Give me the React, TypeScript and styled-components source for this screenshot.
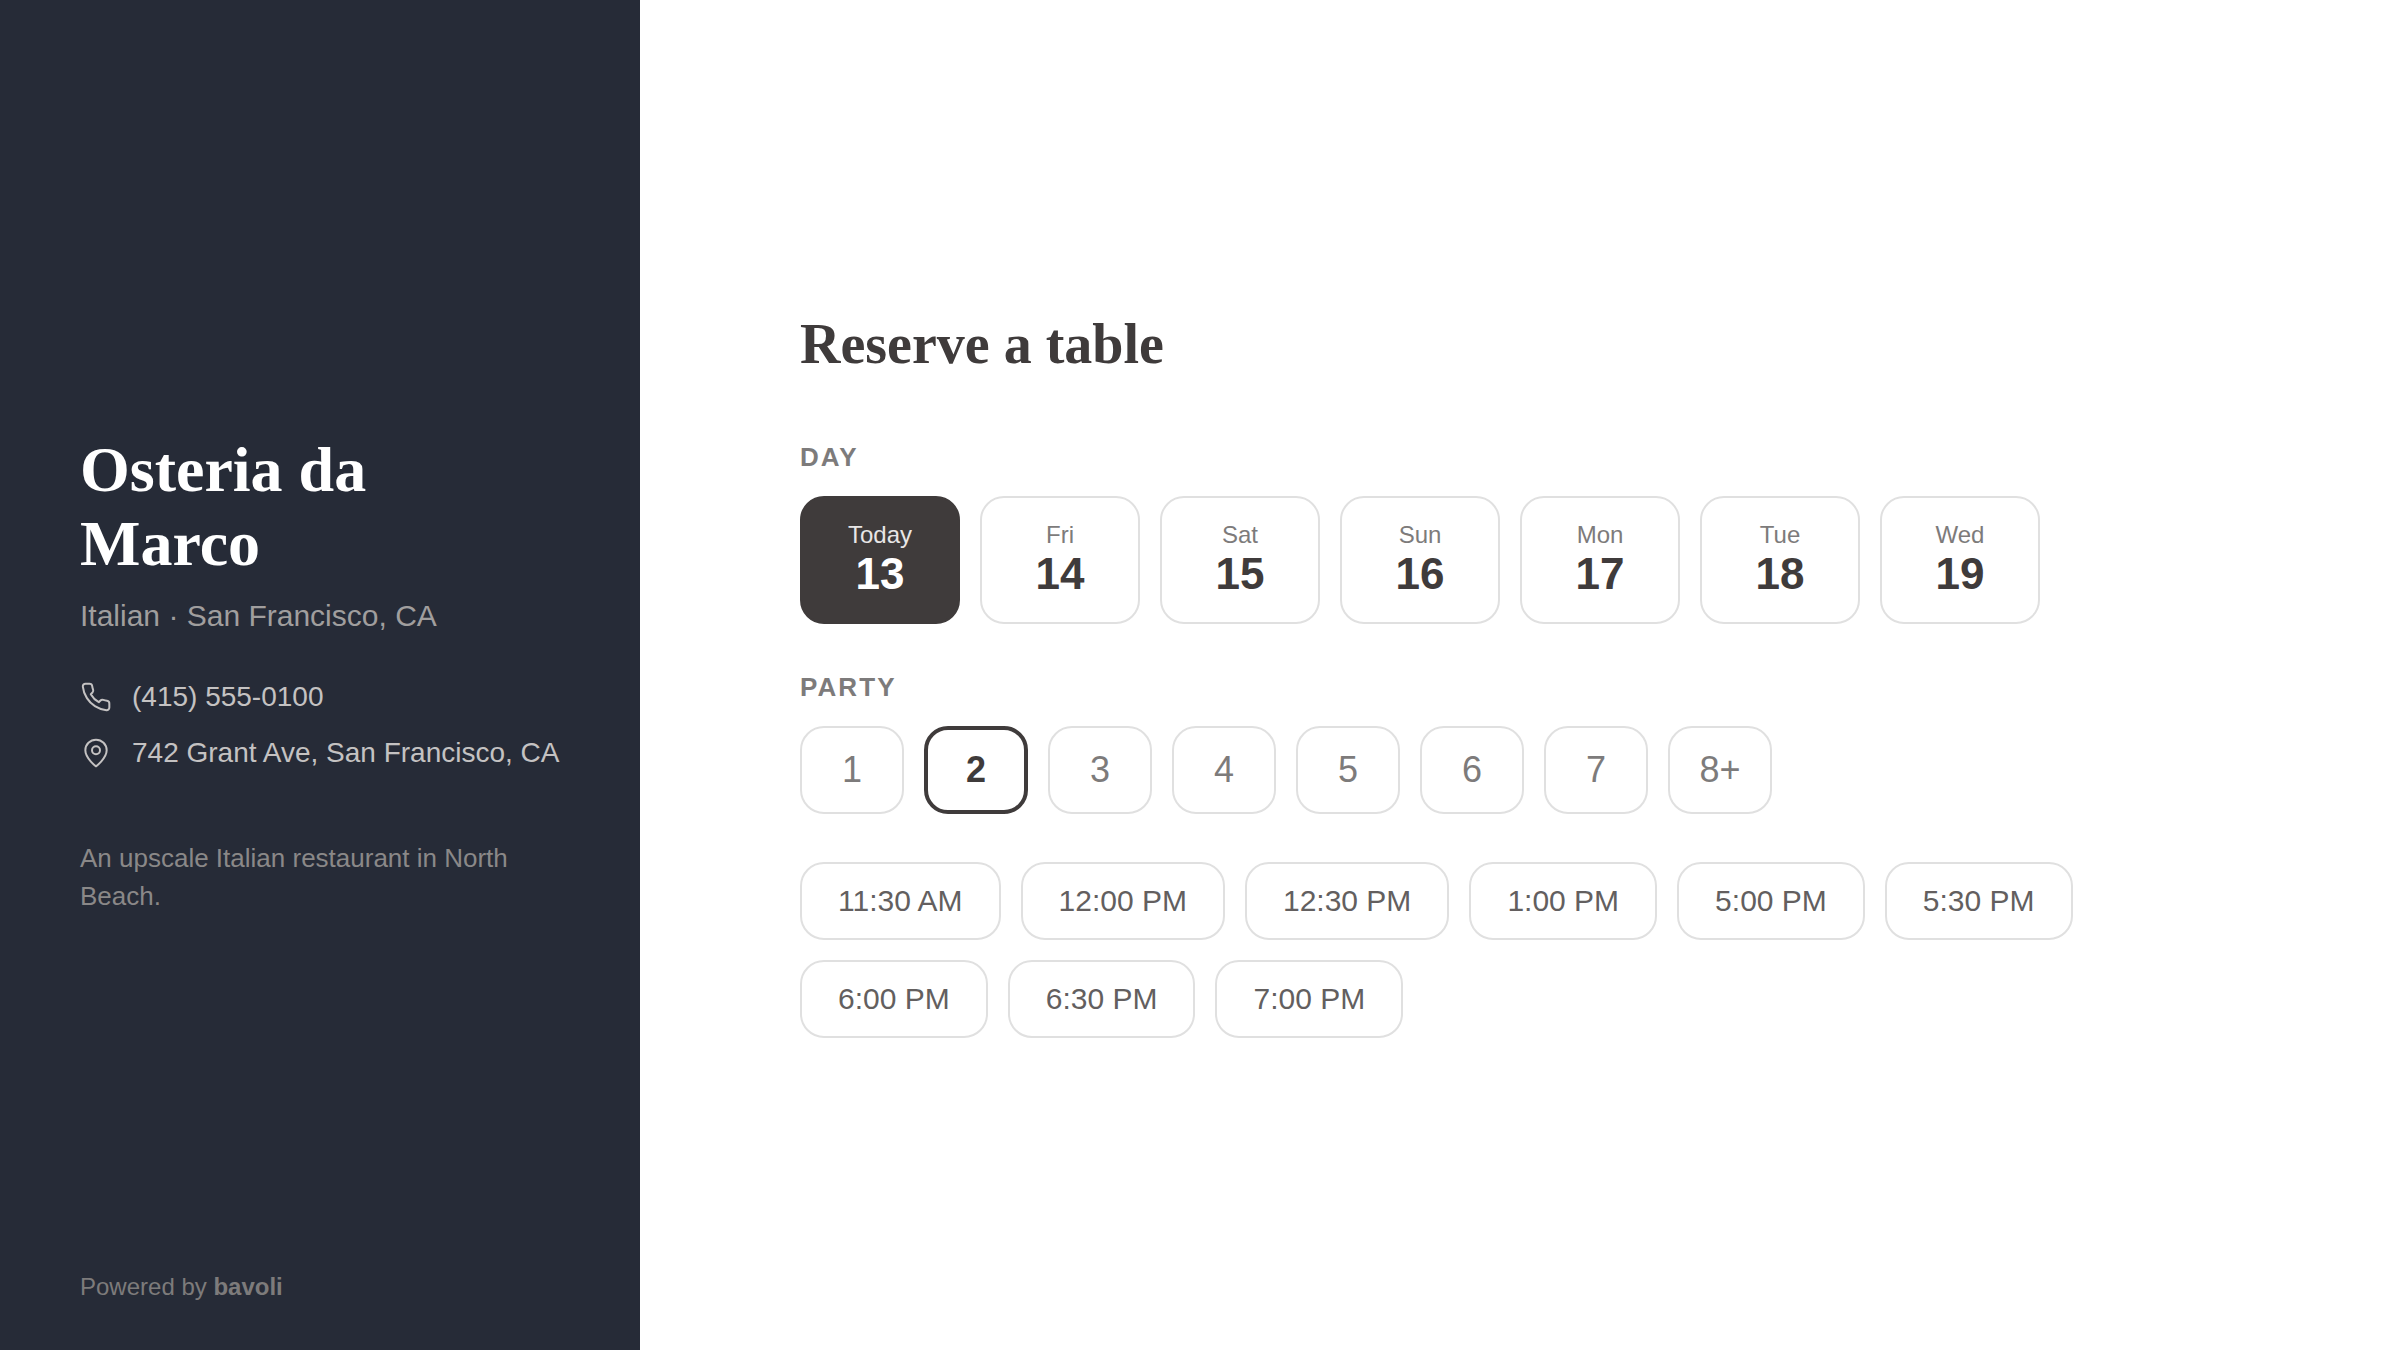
import * as React from 'react';
import styled, { createGlobalStyle } from 'styled-components';

const GlobalStyle = createGlobalStyle`
    html, body {
        margin: 0;
        padding: 0;
        background: #fff;
        font-family: "Liberation Sans", Arial, sans-serif;
    }
`;

const Page = styled.div`
    display: flex;
    width: 2400px;
    height: 1350px;
    overflow: hidden;
`;

const Sidebar = styled.aside`
    display: flex;
    flex-direction: column;
    box-sizing: border-box;
    width: 640px;
    flex-shrink: 0;
    padding: 80px 80px 47px;
    background-color: #262b37;
`;

const SidebarBody = styled.div`
    flex-grow: 1;
    display: flex;
    flex-direction: column;
    justify-content: center;
    padding-bottom: 3px;
`;

const Name = styled.h1`
    margin: 0 0 15px;
    font-family: "Liberation Serif", "Times New Roman", serif;
    font-size: 64px;
    line-height: 74px;
    font-weight: 700;
    color: #fff;
`;

const Cuisine = styled.div`
    margin-bottom: 43px;
    font-size: 30px;
    line-height: 40px;
    color: #a09e9e;
`;

const ContactRow = styled.div`
    display: flex;
    align-items: center;
    gap: 20px;
    margin-bottom: 20px;
    font-size: 28px;
    line-height: 36px;
    color: #c4c2c2;

    svg {
        flex-shrink: 0;
        width: 32px;
        height: 32px;
    }
`;

const About = styled.p`
    margin: 48px 0 0;
    font-size: 26px;
    line-height: 38px;
    color: #8a8888;
`;

const Powered = styled.div`
    font-size: 24px;
    line-height: 32px;
    color: #7d7b7b;

    strong {
        font-weight: 700;
    }
`;

const Main = styled.main`
    flex-grow: 1;
    display: flex;
    flex-direction: column;
    justify-content: center;
    box-sizing: border-box;
    padding: 0 160px;
`;

const Title = styled.h2`
    margin: 0 0 65px;
    font-family: "Liberation Serif", "Times New Roman", serif;
    font-size: 56px;
    line-height: 64px;
    font-weight: 700;
    color: #3f3b3b;
`;

const SectionLabel = styled.div`
    margin-bottom: 23px;
    font-size: 26px;
    line-height: 32px;
    font-weight: 700;
    letter-spacing: 2.08px;
    color: #7d7b7b;
`;

const Row = styled.div<{ $mb: number }>`
    display: flex;
    flex-wrap: wrap;
    gap: 20px;
    margin-bottom: ${p => p.$mb}px;
`;

const DayButton = styled.div<{ $active?: boolean }>`
    display: flex;
    flex-direction: column;
    align-items: center;
    justify-content: center;
    box-sizing: border-box;
    width: 160px;
    height: 128px;
    padding-bottom: 3px;
    border: 2px solid ${p => p.$active ? '#3f3b3b' : '#e0e0e0'};
    border-radius: 24px;
    background-color: ${p => p.$active ? '#3f3b3b' : '#fff'};
    color: ${p => p.$active ? '#fff' : '#3f3b3b'};
`;

const DayName = styled.span<{ $active?: boolean }>`
    font-size: 24px;
    line-height: 30px;
    color: ${p => p.$active ? '#e8e6e6' : '#7d7b7b'};
`;

const DayNumber = styled.span`
    font-size: 44px;
    line-height: 48px;
    font-weight: 700;
`;

const PartyButton = styled.div<{ $active?: boolean }>`
    display: flex;
    align-items: center;
    justify-content: center;
    box-sizing: border-box;
    width: 104px;
    height: 88px;
    border: ${p => p.$active ? '4px solid #3f3b3b' : '2px solid #e0e0e0'};
    border-radius: 24px;
    font-size: 36px;
    font-weight: ${p => p.$active ? 700 : 400};
    color: ${p => p.$active ? '#3f3b3b' : '#7d7b7b'};
`;

const TimeButton = styled.div`
    display: flex;
    align-items: center;
    box-sizing: border-box;
    height: 78px;
    padding: 0 36px;
    border: 2px solid #e0e0e0;
    border-radius: 24px;
    font-size: 30px;
    color: #635f5f;
`;

const days = [
    { name: 'Today', num: 13 },
    { name: 'Fri', num: 14 },
    { name: 'Sat', num: 15 },
    { name: 'Sun', num: 16 },
    { name: 'Mon', num: 17 },
    { name: 'Tue', num: 18 },
    { name: 'Wed', num: 19 }
];

const party = ['1', '2', '3', '4', '5', '6', '7', '8+'];

const times = [
    '11:30 AM', '12:00 PM', '12:30 PM', '1:00 PM', '5:00 PM',
    '5:30 PM', '6:00 PM', '6:30 PM', '7:00 PM'
];

const PhoneIcon = () => (
    <svg viewBox="0 0 24 24" fill="none" stroke="currentColor" strokeWidth="1.5" strokeLinecap="round" strokeLinejoin="round">
        <path d="M22 16.92v3a2 2 0 0 1-2.18 2 19.79 19.79 0 0 1-8.63-3.07 19.5 19.5 0 0 1-6-6 19.79 19.79 0 0 1-3.07-8.67A2 2 0 0 1 4.11 2h3a2 2 0 0 1 2 1.72 12.84 12.84 0 0 0 .7 2.81 2 2 0 0 1-.45 2.11L8.09 9.91a16 16 0 0 0 6 6l1.27-1.27a2 2 0 0 1 2.11-.45 12.84 12.84 0 0 0 2.81.7A2 2 0 0 1 22 16.92z" />
    </svg>
);

const PinIcon = () => (
    <svg viewBox="0 0 24 24" fill="none" stroke="currentColor" strokeWidth="1.5" strokeLinecap="round" strokeLinejoin="round">
        <path d="M20 10c0 6-8 12-8 12s-8-6-8-12a8 8 0 0 1 16 0Z" />
        <circle cx="12" cy="10" r="3" />
    </svg>
);

const App: React.FC = () => {
    return (
        <Page>
            <GlobalStyle />
            <Sidebar>
                <SidebarBody>
                    <Name>Osteria da Marco</Name>
                    <Cuisine>Italian · San Francisco, CA</Cuisine>
                    <ContactRow><PhoneIcon />(415) 555-0100</ContactRow>
                    <ContactRow><PinIcon />742 Grant Ave, San Francisco, CA</ContactRow>
                    <About>An upscale Italian restaurant in North Beach.</About>
                </SidebarBody>
                <Powered>Powered by <strong>bavoli</strong></Powered>
            </Sidebar>
            <Main>
                <Title>Reserve a table</Title>

                <SectionLabel>DAY</SectionLabel>
                <Row $mb={47}>
                    {days.map((d, i) => (
                        <DayButton key={d.num} $active={i === 0}>
                            <DayName $active={i === 0}>{d.name}</DayName>
                            <DayNumber>{d.num}</DayNumber>
                        </DayButton>
                    ))}
                </Row>

                <SectionLabel>PARTY</SectionLabel>
                <Row $mb={48}>
                    {party.map(p => (
                        <PartyButton key={p} $active={p === '2'}>{p}</PartyButton>
                    ))}
                </Row>

                <Row $mb={0}>
                    {times.map(t => <TimeButton key={t}>{t}</TimeButton>)}
                </Row>
            </Main>
        </Page>
    );
};

export default App;
